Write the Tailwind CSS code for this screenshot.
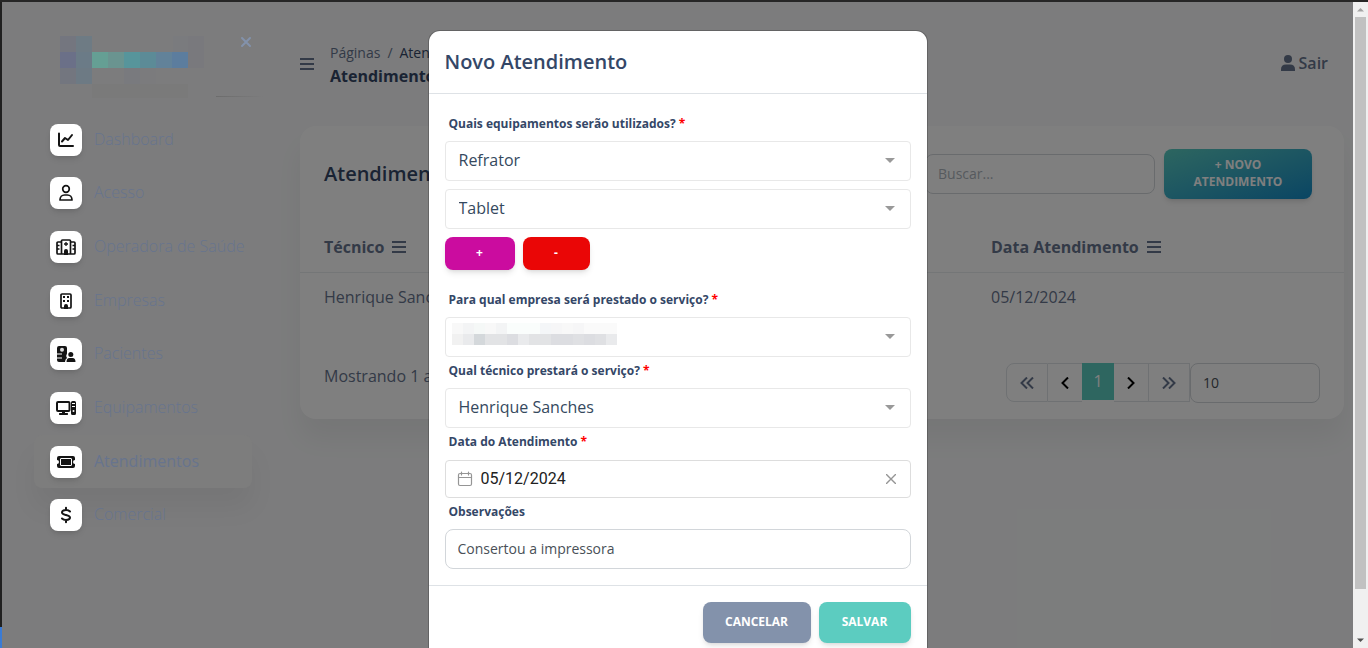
<!DOCTYPE html>
<html lang="pt-BR">
<head>
<meta charset="utf-8">
<title>Atendimentos</title>
<script src="https://cdn.jsdelivr.net/npm/@tailwindcss/browser@4"></script>
</head>
<body class="flex h-screen overflow-hidden border-t-2 border-[#262626] bg-[#f8f9fa] font-['Open_Sans','Noto_Sans',sans-serif] text-base text-[#67748e]">

<!-- Window edge -->
<div class="flex w-[2px] shrink-0 flex-col bg-[#202020]">
  <div class="flex-1"></div>
  <div class="h-[21px] bg-[#3a7bd5]"></div>
</div>

<div class="relative flex min-w-0 flex-1 overflow-hidden">

  <!-- Sidebar -->
  <aside class="relative z-20 w-[274px] shrink-0 pl-8 pr-6">
    <div class="flex h-[111px] items-start justify-between pt-[34px]">
      <svg class="ml-[26px]" width="144" height="62" viewBox="0 0 144 62" shape-rendering="crispEdges" role="img" aria-label="Logo">
        <path fill="#74767f" d="M0 0h16v16H0z"/><path fill="#6e7b84" d="M16 0h16v16H16z"/>
        <path fill="#7a7b7e" d="M113 0h15v16h-15z"/><path fill="#79797d" d="M128 0h16v32h-16z"/>
        <path fill="#6b7088" d="M0 16h16v16H0z"/><path fill="#6b7b87" d="M16 16h16v16H16z"/>
        <path fill="#659f94" d="M32 16h16v16H32z"/><path fill="#6a9490" d="M48 16h16v16H48z"/>
        <path fill="#57959b" d="M64 16h16v16H64z"/><path fill="#5c8b97" d="M80 16h16v16H80z"/>
        <path fill="#628299" d="M96 16h16v16H96z"/><path fill="#5c7d9e" d="M112 16h16v16h-16z"/>
        <path fill="#73767f" d="M0 32h16v16H0z"/><path fill="#6d7a84" d="M16 32h16v16H16z"/>
        <path fill="#797a7e" d="M64 32h16v16H64z"/><path fill="#7b7b7d" d="M80 32h16v16H80z"/>
        <path fill="#7a7a7a" d="M32 48h96v14H32z"/>
      </svg>
      <button aria-label="Fechar menu" class="mr-[-2px] text-[#8392ab]">
        <svg width="16" height="12" viewBox="0 0 16 12" fill="none" stroke="currentColor" stroke-width="2" stroke-linecap="round"><path d="M4 2l8 8M12 2l-8 8"/></svg>
      </button>
    </div>
    <div class="absolute right-3 top-[94px] h-px w-12 bg-linear-to-r from-[#6c6c6c] to-transparent"></div>
    <nav>
      <ul class="grid h-[429px] grid-rows-8 font-light leading-[30px]">
        <li class="flex items-center"><a href="#" class="flex items-start gap-3 pl-4"><span class="flex size-8 items-center justify-center rounded-lg bg-white text-[#141414] shadow-md"><svg width="18" height="18" viewBox="0 0 18 18" fill="none" stroke="currentColor" stroke-width="2" stroke-linecap="round" stroke-linejoin="round"><path d="M2 2.500v11.500q0 1 1 1h13M5 10.500l3-3.500 3 2 4-5"/></svg></span>Dashboard</a></li>
        <li class="flex items-center"><a href="#" class="flex items-start gap-3 pl-4"><span class="flex size-8 items-center justify-center rounded-lg bg-white text-[#141414] shadow-md"><svg width="18" height="18" viewBox="0 0 18 18" fill="none" stroke="currentColor" stroke-width="1.700"><circle cx="9" cy="5" r="3.300"/><path d="M3 16c0-3 2-5 4.500-5h3c2.500 0 4.500 2 4.500 5z" stroke-linejoin="round"/></svg></span>Acesso</a></li>
        <li class="flex items-center"><a href="#" class="flex items-start gap-3 pl-4"><span class="flex size-8 items-center justify-center rounded-lg bg-white text-[#141414] shadow-md"><svg width="22" height="18" viewBox="0 0 22 18" fill="none" stroke="currentColor" stroke-width="1.700" stroke-linejoin="round"><path d="M6.500 4H3q-1 0-1 1v10q0 1 1 1h16q1 0 1-1V5q0-1-1-1h-3.500M6.500 16V3q0-1 1-1h7q1 0 1 1v13M2 7.500h2.500M2 11h2.500M17.500 7.500H20M17.500 11H20"/><path stroke-width="1.300" d="M11 4v4M9 6h4"/><path fill="currentColor" stroke="none" d="M9 17v-4a2 2 0 0 1 4 0v4z"/></svg></span>Operadora de Saúde</a></li>
        <li class="flex items-center"><a href="#" class="flex items-start gap-3 pl-4"><span class="flex size-8 items-center justify-center rounded-lg bg-white text-[#141414] shadow-md"><svg width="14" height="18" viewBox="0 0 14 18"><rect x="2" y="2" width="10" height="14" rx="1" fill="none" stroke="currentColor" stroke-width="1.700"/><path fill="currentColor" d="M4 4h2v2H4zM8 4h2v2H8zM4 8h2v2H4zM8 8h2v2H8zM5 17v-3a2 2 0 0 1 4 0v3z"/></svg></span>Empresas</a></li>
        <li class="flex items-center"><a href="#" class="flex items-start gap-3 pl-4"><span class="flex size-8 items-center justify-center rounded-lg bg-white text-[#141414] shadow-md"><svg width="20" height="18" viewBox="0 0 20 18" fill="currentColor"><path d="M3 1h6q2 0 2 2v5.500a4 4 0 0 0 0 4.500q-2 1.500-2 4H3q-2 0-2-2v-1.500h5v-1H1V9.500h5v-1H1V3q0-2 2-2z"/><circle cx="6" cy="4.800" r="2" fill="#ddd"/><circle cx="14.800" cy="9.500" r="2.500"/><path d="M10.500 17q0-4 3-4h3q3 0 3 4z"/></svg></span>Pacientes</a></li>
        <li class="flex items-center"><a href="#" class="flex items-start gap-3 pl-4"><span class="flex size-8 items-center justify-center rounded-lg bg-white text-[#141414] shadow-md"><svg width="22" height="18" viewBox="0 0 22 18"><rect x="2" y="3" width="12.500" height="9" rx="1" fill="none" stroke="currentColor" stroke-width="2"/><path fill="currentColor" d="M7 12h3v2h2.500q.5 0 .5 1t-.5 1h-8q-.500 0-.500-1t.500-1H7zM17.500 2h2q1.500 0 1.500 1.500v11q0 1.500-1.500 1.500h-2q-1.500 0-1.500-1.500v-11Q16 2 17.500 2z"/><path d="M17 4.500h3M17 7.500h3" stroke="#fff"/><circle cx="18.500" cy="12" r="1" fill="#fff"/></svg></span>Equipamentos</a></li>
        <li class="flex items-center rounded-lg bg-[#7d7d7d] font-normal shadow-[0_20px_27px_rgba(0,0,0,0.05)]"><a href="#" aria-current="page" class="flex items-start gap-3 pl-4"><span class="flex size-8 items-center justify-center rounded-lg bg-white text-[#141414] shadow-md"><svg width="20" height="14" viewBox="0 0 20 14"><path fill="currentColor" d="M3 1h14q2 0 2 2v2a2 2 0 0 0 0 4v2q0 2-2 2H3q-2 0-2-2V9a2 2 0 0 0 0-4V3q0-2 2-2z"/><rect x="4.500" y="3.500" width="11" height="7" rx=".5" fill="none" stroke="#fff"/></svg></span>Atendimentos</a></li>
        <li class="flex items-center"><a href="#" class="flex items-start gap-3 pl-4"><span class="flex size-8 items-center justify-center rounded-lg bg-white text-[#141414] shadow-md"><svg width="14" height="18" viewBox="0 0 14 18" fill="none" stroke="currentColor" stroke-width="2" stroke-linecap="round"><path d="M7 1.800V4M7 14v2.200M11 5.500C10 4.400 8.500 4 7 4 4.700 4 3 5 3 6.500 3 8.200 4.800 8.500 7 9s4 .900 4 2.600C11 13.200 9.300 14 7 14c-1.500 0-3-.500-4-1.500"/></svg></span>Comercial</a></li>
      </ul>
    </nav>
  </aside>

  <!-- Page content -->
  <main class="min-w-0 flex-1 pl-6 pr-[9px]">
    <header class="flex h-[124px] items-center justify-between pr-4">
      <div class="flex items-center gap-4 text-[#344767]">
        <button aria-label="Menu" class="text-[#67748e]"><svg width="14" height="14" viewBox="0 0 14 14" stroke="currentColor" stroke-width="2"><path d="M0 2h14M0 7h14M0 12h14"/></svg></button>
        <div class="pt-[2px]">
          <nav class="flex gap-[7px] text-sm leading-[22px]"><a href="#" class="text-[#67748e]">Páginas</a><span class="text-[#67748e]">/</span><span>Atendimentos</span></nav>
          <h6 class="text-base font-bold leading-6">Atendimentos</h6>
        </div>
      </div>
      <a href="#" class="flex items-center gap-1 pb-[2px] font-semibold">
        <svg width="14" height="16" viewBox="0 0 14 16" fill="currentColor"><circle cx="7" cy="4" r="4"/><path d="M0 16v-1.500Q0 9.500 5 9.500h4q5 0 5 5V16z"/></svg>Sair
      </a>
    </header>

    <section class="rounded-2xl bg-white pb-4 shadow-[0_20px_27px_rgba(0,0,0,0.05)]">
      <div class="flex h-24 items-center justify-between pl-6 pr-8">
        <h5 class="text-xl font-semibold text-[#344767]">Atendimentos</h5>
        <div class="flex items-center gap-[9px]">
          <input type="search" aria-label="Buscar" placeholder="Buscar..." class="h-10 w-[230px] rounded-lg border border-[#d2d6da] px-3 pb-[2px] text-sm text-[#495057] placeholder-[#adb5bd]">
          <button class="w-[148px] rounded-lg bg-linear-to-br from-[#5accc0] to-[#138bc6] px-6 pb-[9px] pt-[7px] text-xs font-bold leading-[17px] text-white shadow-md">+ NOVO ATENDIMENTO</button>
        </div>
      </div>
      <table class="w-full text-left">
        <thead class="border-b border-[#e9ecef]"><tr>
          <th class="h-[50px] w-[667px] pl-6"><span class="flex items-center gap-2">Técnico <svg width="14" height="14" viewBox="0 0 14 14" stroke="currentColor" stroke-width="2"><path d="M0 2h14M0 7h14M0 12h14"/></svg></span></th>
          <th class="pl-6"><span class="flex items-center gap-2">Data Atendimento <svg width="14" height="14" viewBox="0 0 14 14" stroke="currentColor" stroke-width="2"><path d="M0 2h14M0 7h14M0 12h14"/></svg></span></th>
        </tr></thead>
        <tbody><tr><td class="h-[50px] pl-6">Henrique Sanches</td><td class="pl-6">05/12/2024</td></tr></tbody>
      </table>
      <div class="mt-[41px] flex items-start justify-between pl-6 pr-6">
        <p class="pt-px">Mostrando 1 a 1</p>
        <div class="flex items-start">
          <div class="flex h-[39px] items-stretch text-[#67748e]">
            <button aria-label="Primeira página" class="flex w-[42px] items-center justify-center rounded-l-lg border border-[#dee2e6]"><svg width="14" height="12" viewBox="0 0 14 12" fill="none" stroke="currentColor" stroke-width="2"><path d="M7 .500L1.500 6 7 11.500M13 .500L7.500 6l5.500 5.500"/></svg></button>
            <button aria-label="Página anterior" class="flex w-[34px] items-center justify-center border-y border-[#dee2e6] text-black"><svg width="8" height="12" viewBox="0 0 8 12" fill="none" stroke="currentColor" stroke-width="2"><path d="M7 .500L1.500 6 7 11.500"/></svg></button>
            <button aria-current="page" class="h-[37px] w-8 bg-[#5cccc0] pb-[2px] text-white">1</button>
            <button aria-label="Próxima página" class="flex w-[34px] items-center justify-center border-y border-[#dee2e6] text-black"><svg width="8" height="12" viewBox="0 0 8 12" fill="none" stroke="currentColor" stroke-width="2"><path d="M1 .500L6.500 6 1 11.500"/></svg></button>
            <button aria-label="Última página" class="flex w-[42px] items-center justify-center border border-[#dee2e6]"><svg width="14" height="12" viewBox="0 0 14 12" fill="none" stroke="currentColor" stroke-width="2"><path d="M1 .500L6.500 6 1 11.500M7 .500L12.500 6 7 11.500"/></svg></button>
          </div>
          <select aria-label="Itens por página" class="h-10 w-[130px] appearance-none rounded-lg border border-[#d2d6da] px-3 text-sm text-[#495057]"><option>10</option></select>
        </div>
      </div>
    </section>
  </main>

  <div class="absolute inset-0 z-10 bg-black/50"></div>

  <!-- Dialog -->
  <div class="pointer-events-none absolute inset-0 z-30 flex items-start justify-center overflow-hidden pt-7">
    <form role="dialog" aria-labelledby="dlg-title" class="pointer-events-auto w-[500px] rounded-xl border border-black/20 bg-white bg-clip-padding text-[#344767]">
      <div class="flex h-[63px] items-center border-b border-[#dee2e6] px-4"><h5 id="dlg-title" class="text-xl font-semibold">Novo Atendimento</h5></div>
      <div class="px-4 pb-4 pt-5">
        <label for="eq1" class="mb-[7px] ml-1 block text-xs font-bold leading-5">Quais equipamentos serão utilizados? <span class="text-[#f00]">*</span></label>
        <div class="relative mb-2"><select id="eq1" class="block h-10 w-full appearance-none rounded border border-[#e8e8e8] px-[13px] pb-[2px] text-base text-[#35495e]"><option>Refrator</option></select><svg class="pointer-events-none absolute right-4 top-[17px]" width="10" height="5" viewBox="0 0 10 5"><path fill="#999" d="M0 0h10L5 5z"/></svg></div>
        <div class="relative mb-2"><select aria-label="Segundo equipamento" class="block h-10 w-full appearance-none rounded border border-[#e8e8e8] px-[13px] pb-[2px] text-base text-[#35495e]"><option>Tablet</option></select><svg class="pointer-events-none absolute right-4 top-[17px]" width="10" height="5" viewBox="0 0 10 5"><path fill="#999" d="M0 0h10L5 5z"/></svg></div>
        <div class="flex gap-2 text-xs font-bold text-white">
          <button type="button" class="h-[33px] w-[70px] rounded-lg bg-[#cb0c9f] pb-[2px] shadow-md">+</button>
          <button type="button" class="h-[33px] w-[67px] rounded-lg bg-[#ea0606] pb-[2px] shadow-md">-</button>
        </div>
        <label for="emp" class="mb-[7px] ml-1 mt-5 block text-xs font-bold leading-5">Para qual empresa será prestado o serviço? <span class="text-[#f00]">*</span></label>
        <div class="relative"><select id="emp" class="block h-10 w-full appearance-none rounded border border-[#e8e8e8] px-[13px] text-base"><option></option></select>
          <svg class="pointer-events-none absolute left-[7px] top-[6px]" width="165" height="22" viewBox="0 0 15 2" shape-rendering="crispEdges">
            <path fill="#f8f8f8" d="M0 0h1v1H0zM3 0h1v1H3zM10 0h1v1h-1z"/><path fill="#f3f4f5" d="M1 0h1v1H1zM4 0h1v1H4z"/><path fill="#f5f8f7" d="M2 0h1v1H2z"/><path fill="#fafdfc" d="M5 0h3v1H5z"/><path fill="#f4f6f8" d="M8 0h1v1H8z"/><path fill="#f6f6f7" d="M9 0h1v1H9zM11 0h1v1h-1z"/><path fill="#fafafa" d="M12 0h3v1h-3z"/>
            <path fill="#f1f1f1" d="M0 1h1v1H0z"/><path fill="#e9eaec" d="M1 1h1v1H1zM6 1h1v1H6zM14 1h1v1h-1z"/><path fill="#d4d8db" d="M2 1h1v1H2z"/><path fill="#e2e3e5" d="M3 1h2v1H3zM7 1h2v1H7z"/><path fill="#dcdde1" d="M5 1h1v1H5zM9 1h2v1H9zM12 1h1v1h-1z"/><path fill="#dfe0e3" d="M11 1h1v1h-1zM13 1h1v1h-1z"/>
          </svg>
          <svg class="pointer-events-none absolute right-4 top-[17px]" width="10" height="5" viewBox="0 0 10 5"><path fill="#999" d="M0 0h10L5 5z"/></svg></div>
        <label for="tec" class="mb-[7px] ml-1 mt-1 block text-xs font-bold leading-5">Qual técnico prestará o serviço? <span class="text-[#f00]">*</span></label>
        <div class="relative"><select id="tec" class="block h-10 w-full appearance-none rounded border border-[#e8e8e8] px-[13px] pb-[2px] text-base text-[#35495e]"><option>Henrique Sanches</option></select><svg class="pointer-events-none absolute right-4 top-[17px]" width="10" height="5" viewBox="0 0 10 5"><path fill="#999" d="M0 0h10L5 5z"/></svg></div>
        <label for="dt" class="mb-2 ml-1 mt-1 block text-xs font-bold leading-5">Data do Atendimento <span class="text-[#f00]">*</span></label>
        <div class="flex h-[38px] items-center gap-2 rounded border border-[#ddd] pl-[11px] pr-3">
          <svg width="16" height="16" viewBox="0 0 16 16" fill="none" stroke="#959595" stroke-width="1.200" stroke-linecap="round"><rect x="1.500" y="2.500" width="13" height="12" rx="1.500"/><path d="M1.500 6.500h13M4.500 1v3M11.500 1v3"/></svg>
          <input id="dt" value="05/12/2024" class="min-w-0 flex-1 font-[Roboto,sans-serif] text-base text-[#212121] outline-none">
          <button type="button" aria-label="Limpar data" class="mr-[2px]"><svg width="10" height="10" viewBox="0 0 10 10" stroke="#959595" stroke-width="1.400"><path d="M0 0l10 10M10 0L0 10"/></svg></button>
        </div>
        <label for="obs" class="mb-[7px] ml-1 mt-1 block text-xs font-bold leading-5">Observações</label>
        <input id="obs" value="Consertou a impressora" class="block h-10 w-full rounded-lg border border-[#d2d6da] px-3 pb-[2px] text-sm text-[#495057]">
      </div>
      <div class="flex justify-end gap-2 border-t border-[#dee2e6] p-4 text-xs font-bold text-white">
        <button type="button" class="h-[41px] w-[108px] rounded-lg bg-[#8392ab] pb-[2px] shadow-md">CANCELAR</button>
        <button type="submit" class="h-[41px] w-[92px] rounded-lg bg-[#5cccc0] pb-[2px] shadow-md">SALVAR</button>
      </div>
    </form>
  </div>
</div>

<!-- Scrollbar -->
<div class="flex w-[15px] shrink-0 flex-col items-center bg-[#f0f0f0]">
  <svg class="my-[5px] shrink-0" width="7" height="5" viewBox="0 0 7 5"><path fill="#a3a3a3" d="M0 4.500L3.500 1 7 4.500z"/></svg>
  <div class="h-[572px] w-[11px] bg-[#c1c1c1]"></div>
  <div class="flex-1"></div>
  <svg class="my-[5px] shrink-0" width="7" height="5" viewBox="0 0 7 5"><path fill="#505050" d="M0 .500L3.500 4 7 .500z"/></svg>
</div>
</body>
</html>
